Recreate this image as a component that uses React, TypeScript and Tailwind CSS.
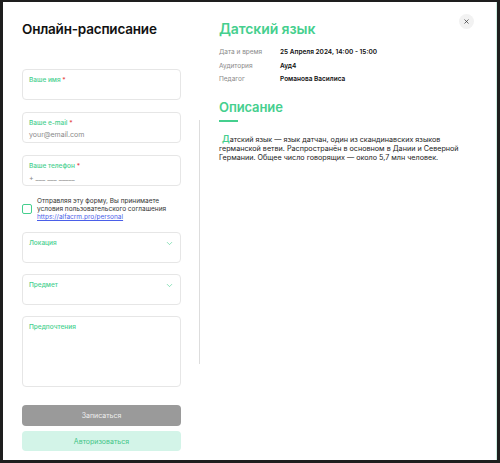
import { ChevronDown, X } from 'lucide-react'

const font = { fontFamily: 'Inter, "Noto Sans", sans-serif' }

function Field({ label, required, value, select, tall }: { label: string; required?: boolean; value?: string; select?: boolean; tall?: boolean }) {
  return (
    <div
      className={`relative w-full rounded-[4px] border border-[#e6e6e6] bg-white px-[6px] pt-[6px] ${tall ? 'h-[71px]' : 'h-[31px]'}`}
    >
      <div className="text-[6.5px] font-medium leading-[9px] text-[#45cf8e]">
        {label}
        {required && <span className="text-[#e5484d]"> *</span>}
      </div>
      {value && <div className="mt-[2px] text-[7px] leading-[9px] text-[#8a8a8a]">{value}</div>}
      {select && (
        <ChevronDown className="absolute right-[6px] top-[6px] text-[#45cf8e]" size={9} strokeWidth={1.6} />
      )}
    </div>
  )
}

export default function App() {
  return (
    <div
      className="flex h-[463px] w-[500px] overflow-hidden border-b-[3px] border-l-[3px] border-r-[3px] border-t-2 border-[#1e1e1e] bg-white text-[#1a1a1a]"
      style={font}
    >
      <div className="flex h-full w-full border-r border-[#cdeee2]">
        {/* Left: form */}
        <div className="flex w-[178px] shrink-0 flex-col pl-[19px]">
          <h1 className="mt-[18px] text-[13.5px] font-semibold leading-[18px] tracking-[-0.2px] text-[#111]">
            Онлайн-расписание
          </h1>

          <div className="mt-[31px] flex flex-col gap-[12px]">
            <Field label="Ваше имя" required />
            <Field label="Ваше e-mail" required value="your@email.com" />
            <Field label="Ваше телефон" required value="+ ___ ___ _____" />
          </div>

          <div className="mt-[11px] flex items-center gap-[5px]">
            <div className="h-[10px] w-[10px] shrink-0 rounded-[2px] border border-[#45cf8e]" />
            <div className="text-[6.5px] leading-[8px] text-[#333]">
              Отправляя эту форму, Вы принимаете
              <br />
              условия пользовательского соглашения
              <br />
              <span className="text-[#4a5ee8] underline">https://alfacrm.pro/personal</span>
            </div>
          </div>

          <div className="mt-[11px] flex flex-col gap-[11px]">
            <Field label="Локация" select />
            <Field label="Предмет" select />
            <Field label="Предпочтения" tall />
          </div>

          <button className="mt-[18px] h-[21px] w-full rounded-[4px] bg-[#9a9a9a] text-[7px] leading-none text-[#eeeeee]">
            Записаться
          </button>
          <button className="mt-[5px] h-[20px] w-full rounded-[4px] bg-[#d3f4e8] text-[7px] leading-none text-[#3fc486]">
            Авторизоваться
          </button>
        </div>

        {/* Divider */}
        <div className="ml-[18px] mt-[118px] h-[244px] w-px shrink-0 bg-[#dddddd]" />

        {/* Right: details */}
        <div className="relative flex-1 pl-[19px] pr-[20px]">
          <button className="absolute right-[22px] top-[12px] flex h-[15px] w-[15px] items-center justify-center rounded-full bg-[#f2f2f2] text-[#333]">
            <X size={7} strokeWidth={2.5} />
          </button>

          <h2 className="mt-[18px] text-[14px] font-semibold leading-[18px] tracking-[-0.1px] text-[#45cf8e]">Датский язык</h2>

          <div className="mt-[10px] grid grid-cols-[61px_1fr] gap-y-[4.5px] text-[6.5px] leading-[9px]">
            <span className="text-[#8a8a8a]">Дата и время</span>
            <span className="font-semibold text-[#111]">25 Апреля 2024, 14:00 - 15:00</span>
            <span className="text-[#8a8a8a]">Аудитория</span>
            <span className="font-semibold text-[#111]">Ауд4</span>
            <span className="text-[#8a8a8a]">Педагог</span>
            <span className="font-semibold text-[#111]">Романова Василиса</span>
          </div>

          <h3 className="mt-[15px] text-[13px] font-semibold leading-[16px] tracking-[-0.1px] text-[#45cf8e]">Описание</h3>
          <div className="mt-[5px] h-[1.5px] w-[19px] bg-[#45cf8e]" />

          <p className="mt-[12px] text-[7.2px] leading-[9px] text-[#222]">
            <span className="pl-[3px] text-[9px] font-semibold leading-[9px] text-[#45cf8e]">Д</span>атский язык — язык датчан, один из скандинавских языков германской ветви. Распространён в основном в Дании и Северной Германии. Общее число говорящих — около 5,7 млн человек.
          </p>
        </div>
      </div>
    </div>
  )
}
